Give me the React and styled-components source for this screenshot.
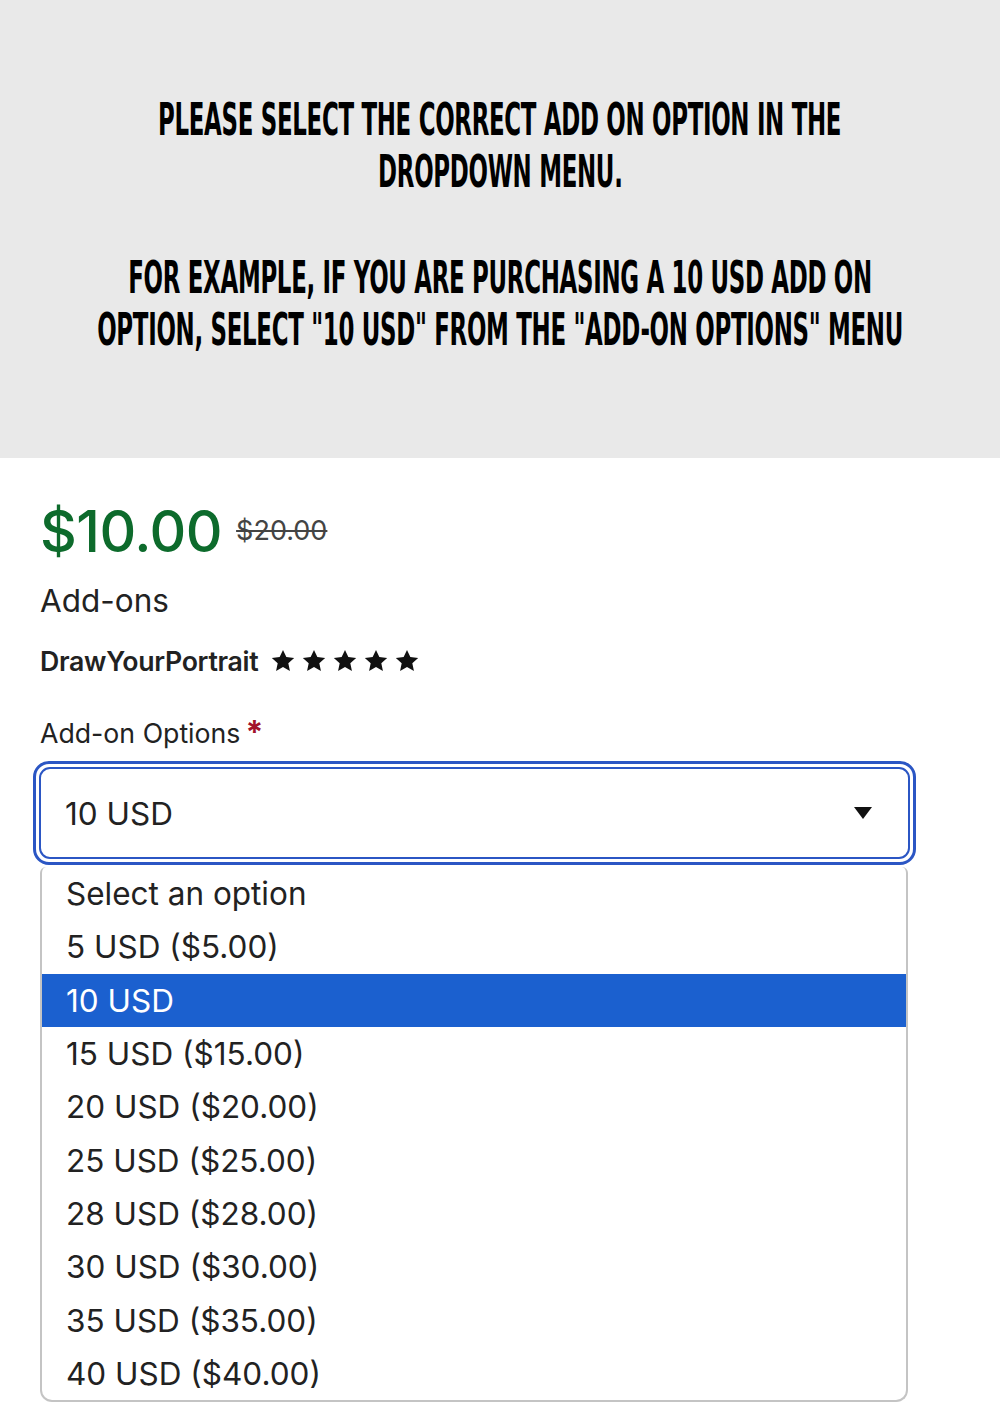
import styled, { createGlobalStyle } from "styled-components";

const GlobalStyle = createGlobalStyle`
  body {
    margin: 0;
    background: #ffffff;
    font-family: Inter, "Liberation Sans", sans-serif;
  }
`;

const options = [
  "Select an option",
  "5 USD ($5.00)",
  "10 USD",
  "15 USD ($15.00)",
  "20 USD ($20.00)",
  "25 USD ($25.00)",
  "28 USD ($28.00)",
  "30 USD ($30.00)",
  "35 USD ($35.00)",
  "40 USD ($40.00)",
];

function Star() {
  return (
    <svg width="26" height="26" viewBox="0 0 24 24">
      <path
        d="M12 1.8l3.1 6.6 7.2.8-5.4 4.9 1.5 7.1L12 17.6l-6.4 3.6 1.5-7.1L1.7 9.2l7.2-.8z"
        fill="#111"
        strokeLinejoin="round"
      />
    </svg>
  );
}

export default function App() {
  return (
    <Page>
      <GlobalStyle />
      <Banner>
        <Notice>
          <Line>PLEASE SELECT THE CORRECT ADD ON OPTION IN THE</Line>
          <Line>DROPDOWN MENU.</Line>
        </Notice>
        <Notice>
          <Line>FOR EXAMPLE, IF YOU ARE PURCHASING A 10 USD ADD ON</Line>
          <Line>OPTION, SELECT "10 USD" FROM THE "ADD-ON OPTIONS" MENU</Line>
        </Notice>
      </Banner>

      <Product>
        <PriceRow>
          <Price>$10.00</Price>
          <OldPrice>$20.00</OldPrice>
        </PriceRow>
        <Title>Add-ons</Title>
        <ShopRow>
          <ShopName>DrawYourPortrait</ShopName>
          <Stars>
            <Star />
            <Star />
            <Star />
            <Star />
            <Star />
          </Stars>
        </ShopRow>
        <Label>
          Add-on Options<Required>*</Required>
        </Label>

        <SelectRing>
          <SelectBox>
            <span>10 USD</span>
            <svg width="18" height="12" viewBox="0 0 18 12">
              <path d="M0 0h18L9 12z" fill="#111" />
            </svg>
          </SelectBox>
        </SelectRing>

        <Menu>
          {options.map((o) => (
            <Option key={o} $active={o === "10 USD"}>
              {o}
            </Option>
          ))}
        </Menu>
      </Product>
    </Page>
  );
}

const Page = styled.div`
  width: 1000px;
  height: 1402px;
  overflow: hidden;
`;

const Banner = styled.div`
  background: #e9e9e9;
  height: 458px;
  box-sizing: border-box;
  padding-top: 94px;
  display: flex;
  flex-direction: column;
  gap: 54px;
  align-items: center;
`;

const Notice = styled.div`
  display: flex;
  flex-direction: column;
  align-items: center;
`;

const Line = styled.div`
  font-family: "DejaVu Sans Condensed", "DejaVu Sans", sans-serif;
  font-stretch: condensed;
  font-weight: 700;
  font-size: 45px;
  line-height: 52px;
  color: #000;
  white-space: nowrap;
  transform: scaleX(0.565);
  letter-spacing: -0.5px;
`;

const Product = styled.div`
  padding: 42px 0 0 40px;
  display: flex;
  flex-direction: column;
`;

const PriceRow = styled.div`
  display: flex;
  align-items: baseline;
  gap: 14px;
`;

const Price = styled.div`
  font-size: 57px;
  line-height: 64px;
  color: #0d6b2c;
  font-weight: 500;
  letter-spacing: -0.5px;
`;

const OldPrice = styled.div`
  font-size: 27px;
  color: #444;
  text-decoration: line-through;
  position: relative;
  top: -12px;
`;

const Title = styled.div`
  margin-top: 17px;
  font-size: 31.5px;
  line-height: 40px;
  color: #222;
`;

const ShopRow = styled.div`
  margin-top: 24px;
  display: flex;
  align-items: center;
  gap: 12px;
`;

const ShopName = styled.div`
  font-size: 26.7px;
  font-weight: 600;
  color: #222;
  letter-spacing: -0.3px;
`;

const Stars = styled.div`
  display: flex;
  gap: 5px;
`;

const Label = styled.div`
  margin-top: 40px;
  font-size: 26.7px;
  color: #222;
  line-height: 32px;
  display: flex;
  align-items: flex-start;
`;

const Required = styled.span`
  color: #a3122c;
  margin-left: 5px;
  font-size: 32px;
  font-weight: 700;
  line-height: 32px;
`;

const SelectRing = styled.div`
  margin: 12px 0 0 -7px;
  width: 883px;
  height: 104px;
  box-sizing: border-box;
  border: 3px solid #2b56c4;
  border-radius: 16px;
  padding: 3px;
  background: #fff;
`;

const SelectBox = styled.div`
  height: 100%;
  box-sizing: border-box;
  border: 2px solid #2b56c4;
  border-radius: 11px;
  display: flex;
  align-items: center;
  justify-content: space-between;
  padding: 0 36px 0 24px;
  font-size: 31.5px;
  color: #222;
`;

const Menu = styled.div`
  margin-top: 2px;
  width: 868px;
  box-sizing: border-box;
  border: 2px solid #c4c4c4;
  border-top: none;
  border-radius: 6px 6px 12px 12px;
  background: #fff;
`;

const Option = styled.div`
  height: 53.3px;
  display: flex;
  align-items: center;
  padding-left: 24px;
  font-size: 31.5px;
  color: ${(p) => (p.$active ? "#ffffff" : "#222")};
  background: ${(p) => (p.$active ? "#1b60cf" : "transparent")};
`;
